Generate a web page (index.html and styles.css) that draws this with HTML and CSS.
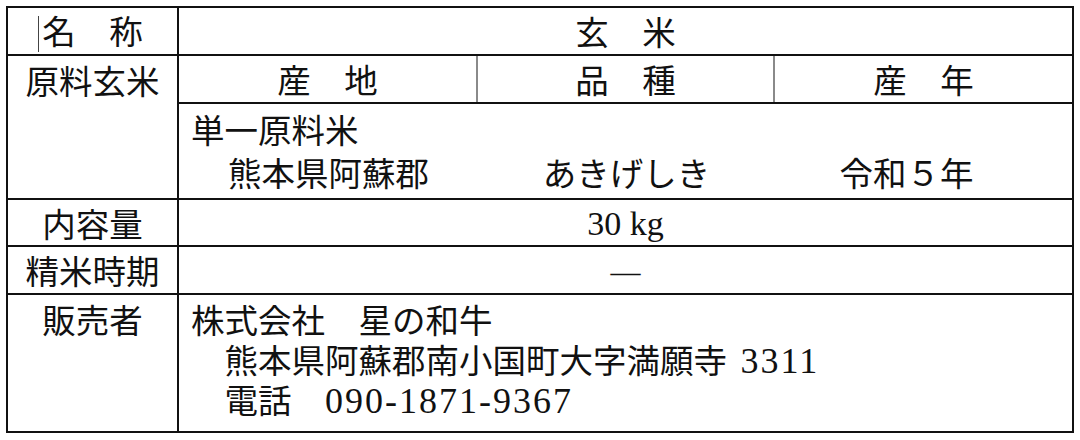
FILE: index.html
```html
<!DOCTYPE html>
<html lang="ja">
<head>
<meta charset="utf-8">
<title>玄米 表示</title>
<link rel="stylesheet" href="styles.css">
</head>
<body>
<div class="page">
  <table class="label">
    <colgroup>
      <col class="c-head">
      <col class="c-a">
      <col class="c-b">
      <col class="c-c">
    </colgroup>
    <tr class="r-name">
      <th><span class="caret"></span>名　称</th>
      <td colspan="3" class="center">玄　米</td>
    </tr>
    <tr class="r-head">
      <th rowspan="2" class="top">原料玄米</th>
      <td class="center gray-r">産　地</td>
      <td class="center gray-r">品　種</td>
      <td class="center">産　年</td>
    </tr>
    <tr class="r-origin">
      <td colspan="3" class="origin">
        <div class="origin-title">単一原料米</div>
        <div class="origin-line">
          <span class="o-a">熊本県阿蘇郡</span>
          <span class="o-b">あきげしき</span>
          <span class="o-c">令和５年</span>
        </div>
      </td>
    </tr>
    <tr class="r-std">
      <th>内容量</th>
      <td colspan="3" class="center"><span class="lat">30 kg</span></td>
    </tr>
    <tr class="r-std2">
      <th>精米時期</th>
      <td colspan="3" class="center"><span class="dash">―</span></td>
    </tr>
    <tr class="r-seller">
      <th class="top seller-head">販売者</th>
      <td colspan="3" class="seller">
        <div class="s-line">株式会社　星の和牛</div>
        <div class="s-line">　熊本県阿蘇郡南小国町大字満願寺 <span class="num addr">3311</span></div>
        <div class="s-line">　電話　<span class="num">090-1871-9367</span></div>
      </td>
    </tr>
  </table>
</div>
</body>
</html>
```

FILE: styles.css
```css
html, body {
  margin: 0;
  padding: 0;
  background: #ffffff;
}

.page {
  padding: 6px 0 0 6px;
}

.label {
  border-collapse: collapse;
  table-layout: fixed;
  width: 1068px;
  font-family: "Noto Sans CJK JP", "Noto Sans CJK SC", sans-serif;
  font-size: 33.5px;
  color: #111;
  line-height: 40px;
}

.c-head { width: 171px; }
.c-a { width: 299px; }
.c-b { width: 297px; }
.c-c { width: 299px; }

.label th,
.label td {
  border: 2px solid #111;
  padding: 0;
  font-weight: 400;
  vertical-align: middle;
  white-space: nowrap;
}

.label th {
  text-align: center;
}

.label td.gray-r {
  border-right: 2px solid #8a8a8a;
}

.center {
  text-align: center;
}

.top {
  vertical-align: top !important;
}

.r-name { height: 48px; }
.r-head { height: 48px; }
.r-origin { height: 94px; }
.r-std { height: 47px; }
.r-std2 { height: 48px; }
.r-seller { height: 138px; }

.r-head th.top {
  line-height: 48px;
}

.caret {
  display: inline-block;
  width: 1px;
  height: 36px;
  background: #444;
  vertical-align: middle;
  margin-left: -4px;
  margin-right: 3px;
}

.origin {
  padding: 3px 0 5px 0 !important;
  line-height: 43px;
}

.origin-title {
  padding-left: 12px;
}

.origin-line {
  display: grid;
  grid-template-columns: 299px 297px 1fr;
}

.o-a {
  text-align: center;
}

.o-b {
  text-align: center;
}

.o-c {
  text-align: center;
  padding-right: 34px;
}

.lat {
  font-family: "Liberation Serif", serif;
  font-size: 34px;
}

.dash {
  font-family: "Liberation Serif", serif;
  font-size: 30px;
}

.seller {
  vertical-align: top !important;
  padding: 4px 0 6px 12px !important;
}

.s-line {
  height: 40px;
  line-height: 40px;
}

.seller-head {
  padding-top: 4px !important;
  line-height: 40px;
}

.num {
  font-family: "Liberation Serif", serif;
  font-size: 36px;
  letter-spacing: 2px;
  line-height: 1;
}

.num.addr {
  margin-left: 6px;
}
```
